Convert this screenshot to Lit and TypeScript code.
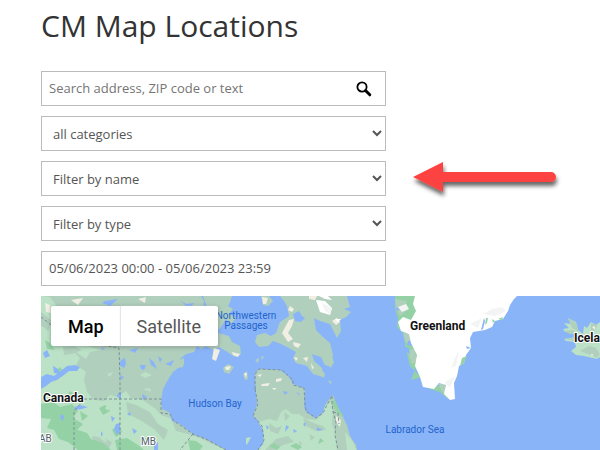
import { LitElement, html, css, svg } from "lit";
import { customElement, state } from "lit/decorators.js";

type Patch = { fill: string; d: string };

const TUNDRA = "#b1cfbd";
const GREEN = "#bbe2c6";
const FOREST = "#94d2a5";
const WATER = "#8ab4f8";
const ROCK = "#f1efe4";
const ICE = "#ffffff";
const SNOW = "#f3f4f4";

const patches: Patch[] = [
  // mainland of Canada, west of Hudson Bay
  { fill: TUNDRA, d: "M41 296H201L204 301 203 308 210 314 218 333 229 336 232 342 240 346 241 354 235 357 226 351 219 347 213 350 206 346 201 349 197 346 194 352 186 354 180 359 184 362 183 367 178 368 173 372 169 378 163 389 161 401 162 409 169 412 172 421 180 424 193 434 208 440 226 450H41Z" },
  { fill: TUNDRA, d: "M203 296H232L230 302 228 306 233 309 229 314 236 318 231 324 226 319 219 330 213 316 207 307Z" },
  // boreal belt
  { fill: GREEN, d: "M41 296H44L50 305 54 315 60 321 64 328 58 334 66 340 70 345 78 348 74 352 80 358 76 365 86 372 84 380 87 392 94 400 104 401 110 395 118 397 126 391 131 398 143 400 150 405 156 409 161 415 170 418 172 421 176 431 188 434 200 438 212 444 226 450H41Z" },
  { fill: GREEN, d: "M41 296L50 297 56 305 62 309 70 315 60 318 68 330 85 335 92 341 84 345 100 350 90 352 86 359 80 355 72 348 62 350 55 343 48 337 41 330Z" },
  { fill: TUNDRA, d: "M63 347L74 346 82 350 72 354 64 355ZM126 402L136 405 150 412 158 424 168 430 164 440 154 429 140 420 128 414ZM41 312L52 321 48 331 41 325ZM92 436L104 438 112 442 108 450H96Z" },
  { fill: FOREST, d: "M41 404L53 402 60 407 72 404 78 411 73 418 83 424 76 431 87 437 83 443 98 450H78L68 442 59 439 54 430 47 428 51 419 41 418ZM75 429L87 433 91 439 103 443 111 450H85ZM80 411L88 416 82 421ZM115 440L127 438 138 445 144 450H117ZM188 440L196 441 203 446 200 450H190Z" },
  { fill: FOREST, d: "M66 397L70 391 75 395 70 401ZM99 408L105 405 110 411 103 415ZM112 430L119 425 122 432 116 437ZM56 371L60 367 64 372 60 376ZM45 340L50 343 55 350 47 349ZM142 440L149 436 153 442 144 446Z" },
  { fill: WATER, d: "M41 377L47 374 54 376 62 370 67 366 75 365 80 367 77 371 69 371 64 375 57 380 51 382 46 386 41 389ZM53 366L58 369 60 374 54 373ZM121 360L125 358 126 364 124 368 119 365ZM120 375L124 377 121 380ZM118 393L121 392 121 399 117 397ZM116 424L120 423 120 432 117 435 114 429ZM111 416L115 418 112 422ZM75 407L80 405 88 407 82 409 74 410ZM140 365L146 365 144 370 141 369ZM149 358L154 362 157 369 151 365ZM158 356L162 359 160 363ZM132 428L137 431 134 434ZM127 414L131 412 130 416ZM61 414L64 416 63 421 60 418ZM142 394L147 397 143 400ZM101 347L105 349 102 350ZM43 353L47 350 50 356 45 358ZM105 301L118 299 110 306 102 303ZM165 364L174 360 171 366ZM154 443L158 442 158 450H154ZM101 431L103 434 101 437ZM180 300L186 304 194 303 189 309ZM129 350L138 348 135 353Z" },
  { fill: ROCK, d: "M45 303L50 305 51 313 46 312ZM71 300L83 298 78 305ZM138 299L146 297 145 303Z" },
  { fill: GREEN, d: "M107 374L113 372 110 377ZM140 375L145 372 152 375 145 378ZM105 408L109 405 108 411ZM93 416L99 414 96 421ZM99 438L105 436 107 443ZM143 389L150 388 151 392Z" },
  // arctic archipelago
  { fill: TUNDRA, d: "M261 296H269L273 301 268 306 263 305ZM280 296H347L350 307 344 309 351 312 346 317 340 320 341 331 337 338 333 330 330 324 320 321 314 318 316 330 323 337 330 343 333 355 330 359 332 367 325 365 321 357 312 354 314 361 322 368 323 377 313 374 307 366 296 363 293 358 296 352 287 347 281 344 273 341 268 346 259 347 255 342 257 335 265 333 271 336 276 333 280 322 289 316 287 306 284 301Z" },
  { fill: WATER, d: "M293 314L299 311 302 316 305 318 301 322 295 321Z" },
  { fill: TUNDRA, d: "M223 368L228 364 234 367 229 374 224 372ZM243 374L247 371 248 379 245 380ZM255 360L259 358 258 363ZM261 357L264 356 262 360ZM180 360L184 358 184 364 180 367ZM320 335L325 345 331 351 334 363 330 368 326 358 320 354ZM320 368L325 374 324 378 320 375ZM328 380L332 382 330 384Z" },
  { fill: ROCK, d: "M262 297L268 298 266 304 263 304ZM309 296H317L315 300 309 299ZM290 306L294 309 292 312 288 310ZM289 320L294 319 292 326 288 333 293 339 288 342 282 333ZM293 342L301 344 298 348 294 346ZM294 357L298 358 296 361ZM303 358L308 357 307 362ZM311 363L314 368 312 369ZM214 348L220 350 216 361 212 359ZM232 352L240 354 238 357 233 355ZM225 367L231 366 229 370 226 370ZM244 373L247 373 246 378ZM332 321L337 318 340 322 336 325Z" },
  { fill: ICE, d: "M316 300L325 301 332 308 330 315 320 312ZM319 296H328L332 300 325 299ZM335 319L341 319 338 322Z" },
  { fill: SNOW, d: "M322 303L332 308 330 315 325 311Z" },
  // Quebec and Ungava
  { fill: TUNDRA, d: "M255 373L259 369 280 370 289 377 293 384 303 388 305 390 304 406 306 412 315 418 323 413 325 405 330 398 333 395 337 406 343 417 347 425 350 436 356 445 357 450H258L263 446 264 434 260 422 253 416 257 404 256 393Z" },
  { fill: GREEN, d: "M269 419L277 421 281 412 286 409 292 414 299 414 306 419 316 420 322 415 325 407 331 401 333 411 332 424 335 432 337 450H258L264 443 263 429 258 422ZM345 432L350 438 354 444 356 450H347Z" },
  { fill: TUNDRA, d: "M269 423L276 428 282 426 278 434 270 431ZM284 412L290 416 285 421ZM303 418L316 424 323 426 326 430 316 431 306 426ZM276 439L288 436 294 442 283 445 275 450H265ZM309 434L315 437 311 441ZM299 441L302 443 300 447Z" },
  { fill: FOREST, d: "M269 446L274 443 280 447 277 450ZM290 446L296 443 302 447 298 450ZM320 438L324 441 318 444ZM334 398L339 409 344 417 338 414 332 404Z" },
  { fill: WATER, d: "M283 391L288 392 285 395ZM297 392L300 394 298 395ZM311 393L314 393 313 396ZM266 425L269 427 267 430ZM286 425L289 427 285 432ZM303 424L306 422 305 427ZM293 429L297 431 294 433ZM317 427L323 430 317 431Z" },
  { fill: ROCK, d: "M257 375L262 374 260 377ZM262 384L270 383 268 386 261 386ZM272 388L277 388 274 390ZM276 379L282 378 281 381 276 382ZM336 416L341 420 340 427 336 422Z" },
  { fill: GREEN, d: "M246 438L251 437 248 443 246 445Z" },
  // Greenland
  { fill: FOREST, d: "M395 296H415V303H420L424 346 411 380 421 377 440 387 450 385 453 397 447 398 440 392 430 389 423 384 420 376 410 366 407 354 405 345 404 334 397 327 398 319 395 308Z" },
  { fill: TUNDRA, d: "M395 299L406 301 408 309 400 316 396 308ZM403 334L410 331 414 339 408 344 405 341ZM408 351L414 349 417 361 412 364ZM438 384L444 383 448 392 443 393Z" },
  { fill: WATER, d: "M408 341L412 340 413 346 407 345ZM405 347L409 348 410 354 405 351ZM396 307L400 309 397 311Z" },
  { fill: SNOW, d: "M398 307L406 304 409 309 402 312Z" },
  { fill: ICE, d: "M415 296H517L514 299 510 305 508 311 503 319 495 321 492 327 485 330 473 332 470 338 471 348 466 355 464 363 459 366 457 376 454 383 455 399 450 400 444 394 446 385 439 383 434 389 423 387 420 377 415 366 417 355 411 343 409 334 401 331 398 322 403 317 411 320 416 311 413 304Z" },
  { fill: SNOW, d: "M459 350L456 366 451 368 455 358ZM483 314L492 309 502 307 506 311 495 316ZM470 324L482 318 478 328ZM455 376L450 388 445 382Z" },
  { fill: FOREST, d: "M486 318L488 318 487 323 485 325ZM492 319L495 321 493 323ZM498 319L503 317 502 320ZM462 358L467 356 464 363 460 366Z" },
  { fill: WATER, d: "M484 318L485 321 483 329 481 330ZM466 346L471 348 467 349Z" },
  // Iceland
  { fill: GREEN, d: "M600 322L596 325 591 322 587 328 584 326 583 334 578 330 576 322 568 318 571 324 564 323 569 328 563 329 565 332 574 333 577 337 564 339 566 341 575 342 576 347 571 351 576 355 584 356 588 357 597 359 600 357Z" },
  { fill: TUNDRA, d: "M568 318L576 323 579 332 572 328ZM564 331L573 330 578 334 570 334ZM564 339L575 338 575 341ZM580 351L589 346 596 348 600 354 597 358 588 354ZM591 323L597 325 595 331 591 330Z" },
  { fill: ROCK, d: "M592 327L595 326 595 330ZM591 354L593 354 592 357Z" },
];

const borders = [
  "M41 317L55 328 72 335 88 344 107 346 119 348 120 380V450",
  "M84 399H161L161 413 170 414 174 421 180 425 193 434 208 440 226 450",
  "M74 450V411L84 400",
  "M193 434L180 450",
  "M255 389V374L259 369 282 370 293 380 293 385 304 388 305 404 306 411 316 418 323 413 327 405 332 396",
  "M255 389L258 404 253 416 262 426 264 440 258 450",
  "M332 396L332 404 333 412 336 422 335 435 338 450",
  "M333 412L338 413 339 424",
];

@customElement("map-canvas")
class MapCanvas extends LitElement {
  static styles = css`
    :host {
      display: block;
      background: #8ab4f8;
    }
    svg {
      display: block;
      width: 100%;
      height: 100%;
    }
    .border {
      fill: none;
      stroke: #7b9296;
      stroke-width: 1;
      stroke-dasharray: 3 2;
    }
    text {
      font-family: Roboto, sans-serif;
      font-size: 10px;
      paint-order: stroke;
      stroke-linejoin: round;
    }
    .sea {
      fill: #2265cc;
      text-anchor: middle;
    }
    .country {
      font-size: 12px;
      font-weight: 700;
      fill: #111;
      stroke: #fff;
      stroke-width: 2px;
    }
    .province {
      fill: #546069;
      stroke: #fff;
      stroke-width: 2px;
    }
  `;

  render() {
    return html`
      <svg viewBox="41 296 559 154" preserveAspectRatio="xMinYMin slice" role="img" aria-label="Map">
        ${patches.map((p) => svg`<path fill=${p.fill} d=${p.d}></path>`)}
        ${borders.map((d) => svg`<path class="border" d=${d}></path>`)}
        <text class="sea" x="246" y="319">Northwestern</text>
        <text class="sea" x="246" y="329">Passages</text>
        <text class="sea" x="215" y="407">Hudson Bay</text>
        <text class="sea" x="415" y="433">Labrador Sea</text>
        <text class="country" x="43" y="402">Canada</text>
        <text class="country" x="410" y="330">Greenland</text>
        <text class="country" x="574" y="342">Iceland</text>
        <text class="province" x="39" y="442">AB</text>
        <text class="province" x="141" y="445">MB</text>
      </svg>
    `;
  }
}

@customElement("app-root")
class AppRoot extends LitElement {
  @state() private view = "Map";

  static styles = css`
    :host {
      display: flex;
      flex-direction: column;
      box-sizing: border-box;
      min-height: 100vh;
      padding-left: 41px;
      background: #fff;
      color: #555;
      font-family: "Open Sans", sans-serif;
      font-size: 13px;
    }
    * {
      box-sizing: border-box;
    }
    h1 {
      margin: 0;
      padding: 6px 0 25px;
      font-size: 30px;
      line-height: 40px;
      font-weight: 400;
      color: #333;
    }
    .filters {
      position: relative;
      display: flex;
      flex-direction: column;
      gap: 10px;
      width: 345px;
      max-width: 100%;
      margin-bottom: 10px;
    }
    .field {
      width: 100%;
      height: 35px;
      margin: 0;
      padding: 0 7px;
      border: 1px solid #bbb;
      border-radius: 0;
      background: #fff;
      color: #555;
      font: inherit;
      outline: none;
    }
    input.field,
    .query {
      padding-bottom: 2px;
    }
    .search {
      display: flex;
      align-items: center;
      padding-right: 12px;
    }
    .query {
      flex: 1;
      min-width: 0;
      padding: 0 0 2px;
      border: 0;
      outline: none;
      background: none;
      color: #555;
      font: inherit;
    }
    .query::placeholder {
      color: #757575;
    }
    .go {
      display: flex;
      padding: 0;
      border: 0;
      background: none;
    }
    .pointer {
      position: absolute;
      left: 100%;
      top: 84px;
      margin-left: 24px;
    }
    .map {
      flex: 1;
      display: grid;
      min-height: 154px;
    }
    .map > * {
      grid-area: 1 / 1;
      min-height: 0;
    }
    map-canvas {
      height: 100%;
    }
    .types {
      z-index: 1;
      display: flex;
      align-self: start;
      justify-self: start;
      margin: 10px;
      border-radius: 2px;
      background: #fff;
      box-shadow: 0 1px 4px rgba(0, 0, 0, 0.3);
    }
    .type {
      height: 40px;
      padding: 0 17px;
      border: 0;
      background: none;
      color: #565656;
      font: 18px Roboto, sans-serif;
    }
    .type + .type {
      padding-left: 16px;
      box-shadow: -1px 0 1px #e6e6e6;
    }
    .type.on {
      color: #000;
      font-weight: 500;
    }
  `;

  render() {
    return html`
      <h1>CM Map Locations</h1>
      <form class="filters" @submit=${(e: Event) => e.preventDefault()}>
        <div class="field search">
          <input class="query" type="text" aria-label="Search" placeholder="Search address, ZIP code or text" />
          <button class="go" aria-label="Search">
            <svg width="18" height="18" viewBox="0 0 18 18" fill="none" stroke="#000">
              <circle cx="7" cy="7" r="4.6" stroke-width="1.8" />
              <path d="M10.5 10.5L14.8 14.8" stroke-width="3" stroke-linecap="round" />
            </svg>
          </button>
        </div>
        <select class="field" aria-label="Category"><option>all categories</option></select>
        <select class="field" aria-label="Name"><option>Filter by name</option></select>
        <select class="field" aria-label="Type"><option>Filter by type</option></select>
        <input class="field" type="text" aria-label="Date range" value="05/06/2023 00:00 - 05/06/2023 23:59" />
        <svg class="pointer" width="156" height="48" viewBox="0 0 156 48" aria-hidden="true">
          <defs>
            <filter id="shade" x="-10%" y="-30%" width="120%" height="180%">
              <feDropShadow dx="1" dy="4" stdDeviation="2" flood-color="#000" flood-opacity="0.6" />
            </filter>
          </defs>
          <path filter="url(#shade)" fill="#fd4343" d="M3 22L33 7V17H141a5 5 0 0 1 0 10H33V37Z" />
        </svg>
      </form>
      <section class="map" aria-label="Locations map">
        <map-canvas></map-canvas>
        <div class="types">
          ${["Map", "Satellite"].map(
            (name) => html`<button
              class="type ${this.view === name ? "on" : ""}"
              @click=${() => (this.view = name)}
            >${name}</button>`
          )}
        </div>
      </section>
    `;
  }
}
